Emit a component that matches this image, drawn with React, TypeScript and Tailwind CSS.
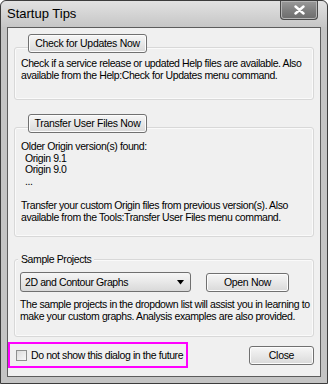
import { useState } from "react";

function WinButton({ label, className }: { label: string; className?: string }) {
  return (
    <button
      className={
        "h-[19px] shrink-0 whitespace-nowrap rounded-[3px] border border-[#707070] bg-gradient-to-b from-[#f6f6f6] via-[#e8e8e8] to-[#d9d9d9] text-[10.5px] leading-none tracking-[-0.3px] text-black shadow-[inset_0_0_0_1px_#fcfcfc] " +
        (className ?? "")
      }
    >
      {label}
    </button>
  );
}

function GroupBox({ children, className }: { children: React.ReactNode; className?: string }) {
  return (
    <div
      className={
        "rounded-[3px] border border-[#d8d8d8] shadow-[inset_0_0_0_1px_#fafafa] " + (className ?? "")
      }
    >
      {children}
    </div>
  );
}

function App() {
  const [hide, setHide] = useState(false);

  return (
    <div
      className="flex h-[384px] w-[328px] flex-col rounded-t-[6px] border border-[#3c3c3c] bg-[#c4c4c4] text-black"
      style={{ fontFamily: '"Liberation Sans", Arial, sans-serif' }}
    >
      {/* title bar */}
      <div className="flex h-[26px] shrink-0 items-start justify-between rounded-t-[6px] bg-gradient-to-b from-[#e2e2e2] to-[#c6c6c6] pl-[6px] pr-[9px]">
        <span className="mt-[6px] text-[13px] leading-[14px]">Startup Tips</span>
        <div className="flex h-[19px] w-[38px] items-center justify-center rounded-b-[4px] border border-t-0 border-[#4a4a4a] bg-gradient-to-b from-[#9a9a9a] via-[#808080] to-[#6c6c6c] shadow-[inset_0_0_0_1px_#b5b5b5]">
          <svg width="11" height="10" viewBox="0 0 11 10">
            <path d="M1.5 1.5 L9.5 8.5 M9.5 1.5 L1.5 8.5" stroke="#ffffff" strokeWidth="2.4" strokeLinecap="round" />
          </svg>
        </div>
      </div>

      {/* client area */}
      <div className="mx-[6px] mb-[6px] flex flex-1 flex-col whitespace-nowrap border border-[#5c5c5c] bg-[#f0f0f0] px-[6px] pt-[6px] text-[10.5px] leading-[12px] tracking-[-0.4px]">
        {/* group 1 */}
        <div className="flex flex-col">
          <WinButton label="Check for Updates Now" className="relative z-10 ml-[14px] w-[119px]" />
          <GroupBox className="-mt-[6px] h-[53px] px-[6px] pt-[9px]">
            <p>Check if a service release or updated Help files are available. Also</p>
            <p>available from the Help:Check for Updates menu command.</p>
          </GroupBox>
        </div>

        {/* group 2 */}
        <div className="mt-[14px] flex flex-col">
          <WinButton label="Transfer User Files Now" className="relative z-10 ml-[14px] w-[119px]" />
          <GroupBox className="-mt-[6px] h-[110px] px-[6px] pt-[13px]">
            <div className="leading-[11.5px]">
              <p>Older Origin version(s) found:</p>
              <p className="pl-[4px]">Origin 9.1</p>
              <p className="pl-[4px]">Origin 9.0</p>
              <p className="pl-[4px]">...</p>
            </div>
            <p className="mt-[12px]">Transfer your custom Origin files from previous version(s). Also</p>
            <p>available from the Tools:Transfer User Files menu command.</p>
          </GroupBox>
        </div>

        {/* group 3 */}
        <div className="mt-[16px] flex flex-col">
          <span className="relative z-10 ml-[4px] w-fit bg-[#f0f0f0] px-[3px]">Sample Projects</span>
          <GroupBox className="-mt-[6px] h-[78px] px-[5px] pt-[12px]">
            <div className="flex items-center">
              <div className="flex h-[20px] w-[171px] shrink-0 items-center justify-between rounded-[3px] border border-[#707070] bg-gradient-to-b from-[#f6f6f6] via-[#e8e8e8] to-[#d9d9d9] pl-[4px] pr-[5px]">
                <span>2D and Contour Graphs</span>
                <svg width="8" height="5" viewBox="0 0 8 5">
                  <path d="M0 0 H7 L3.5 4.5 Z" fill="#000" />
                </svg>
              </div>
              <WinButton label="Open Now" className="ml-[15px] w-[83px]" />
            </div>
            <p className="mt-[6px]">The sample projects in the dropdown list will assist you in learning to</p>
            <p>make your custom graphs. Analysis examples are also provided.</p>
          </GroupBox>
        </div>

        {/* bottom row */}
        <div className="mt-[5px] flex items-start justify-between">
          <label className="-ml-[6px] flex h-[26px] w-[180px] items-center gap-[4px] border-2 border-[#ff00ff] pl-[6px]">
            <span
              onClick={() => setHide(!hide)}
              className="flex h-[11px] w-[11px] shrink-0 items-center justify-center border border-[#8e8f8f] bg-gradient-to-br from-[#dcdcdc] to-[#f8f8f8]"
            >
              {hide && <span className="text-[9px] leading-none">✓</span>}
            </span>
            <span>Do not show this dialog in the future</span>
          </label>
          <WinButton label="Close" className="mt-[4px] w-[65px]" />
        </div>
      </div>
    </div>
  );
}

export default App;
